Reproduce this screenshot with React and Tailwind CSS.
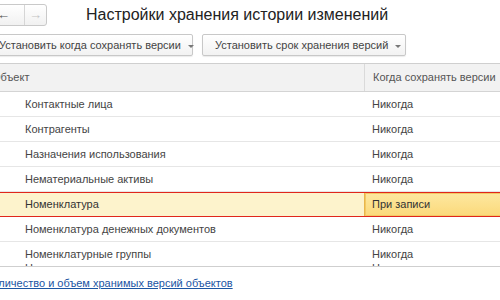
const rows = [
    { name: 'Контактные лица', when: 'Никогда' },
    { name: 'Контрагенты', when: 'Никогда' },
    { name: 'Назначения использования', when: 'Никогда' },
    { name: 'Нематериальные активы', when: 'Никогда' },
    { name: 'Номенклатура', when: 'При записи', selected: true },
    { name: 'Номенклатура денежных документов', when: 'Никогда' },
    { name: 'Номенклатурные группы', when: 'Никогда' },
];

function Caret() {
    return <span className="ml-[7px] inline-block border-x-[3px] border-t-[3px] border-x-transparent border-t-[#777] translate-y-[1px]"></span>;
}

function Row({ row }) {
    if (row.selected) {
        return (
            <div className="flex h-[25px] border-y border-[#e0261c] bg-[#fdf3cc] text-[#333]">
                <div className="w-[380px] pl-[41px] flex items-center">{row.name}</div>
                <div className="flex-1 flex items-center pl-[7px] border-l border-[#e8b64c] bg-gradient-to-b from-[#fde8a0] to-[#fbd97a] shadow-[inset_0_0_0_1px_#f3c964]">
                    {row.when}
                </div>
            </div>
        );
    }
    return (
        <div className="flex h-[25px] border-b border-[#e6e6e6] text-[#444]">
            <div className="w-[380px] pl-[41px] flex items-center">{row.name}</div>
            <div className="flex-1 flex items-center pl-[8px]">{row.when}</div>
        </div>
    );
}

export default function App() {
    return (
        <div className="w-[500px] h-[300px] overflow-hidden bg-white text-[11px] whitespace-nowrap font-['Liberation_Sans',Arial,sans-serif]">
            <div className="flex items-center pt-[4px] h-[26px]">
                <div className="-ml-[10px] flex h-[22px] border border-[#c9c9c9] rounded-[3px] bg-gradient-to-b from-white to-[#f1f1f1]">
                    <div className="w-[33px] flex items-center justify-end pr-[14px] text-[#555] text-[13px] font-bold">←</div>
                    <div className="w-[22px] border-l border-[#d6d6d6] flex items-center justify-center text-[#c4c4c4] text-[13px] font-bold">→</div>
                </div>
                <div className="ml-[39px] text-[16px] text-[#222] leading-none">Настройки хранения истории изменений</div>
            </div>

            <div className="flex gap-[9px] mt-[8px]">
                <button className="-ml-[12px] w-[205px] h-[22px] pl-[10px] flex items-center border border-[#c8c8c8] rounded-[2px] bg-gradient-to-b from-white to-[#f2f2f2] shadow-[0_1px_1px_rgba(0,0,0,0.08)] text-[#444]">
                    Установить когда сохранять версии
                    <Caret />
                </button>
                <button className="w-[204px] h-[22px] pl-[12px] flex items-center border border-[#c8c8c8] rounded-[2px] bg-gradient-to-b from-white to-[#f2f2f2] shadow-[0_1px_1px_rgba(0,0,0,0.08)] text-[#444]">
                    Установить срок хранения версий
                    <Caret />
                </button>
            </div>

            <div className="-ml-[16px] w-[540px] mt-[7px] border-t border-[#cfcfcf]">
                <div className="flex h-[28px] bg-[#f2f2f2] border-b border-[#d4d4d4] text-[#555]">
                    <div className="w-[380px] pl-[8px] flex items-center">Объект</div>
                    <div className="flex-1 flex items-center pl-[8px] border-l border-[#dadada]">Когда сохранять версии</div>
                </div>
                <div className="h-[174px] overflow-hidden">
                    {rows.map((r, i) => (
                        <Row key={i} row={r} />
                    ))}
                </div>
                <div className="h-[3px] -mt-[3px] overflow-hidden flex text-[#444] leading-[11px]">
                    <div className="w-[380px] pl-[41px]">Номенклатурные группы</div>
                    <div className="flex-1 pl-[8px]">Никогда</div>
                </div>
                <div className="border-b border-[#cfcfcf]"></div>
            </div>

            <div className="mt-[9px] -ml-[14px] leading-[14px]">
                <a className="text-[#1b55a3] underline">Количество и объем хранимых версий объектов</a>
            </div>
        </div>
    );
}
